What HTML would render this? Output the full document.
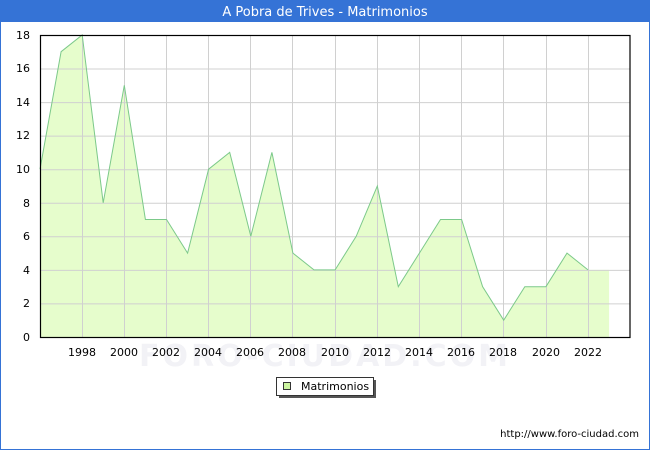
<!DOCTYPE html>
<html><head><meta charset="utf-8"><style>
body{margin:0;width:650px;height:450px;overflow:hidden;background:#fff;font-family:"DejaVu Sans","Liberation Sans",sans-serif;}
</style></head><body>
<svg width="650" height="450" xmlns="http://www.w3.org/2000/svg" style="position:absolute;left:0;top:0">
<rect x="0.5" y="0.5" width="649" height="449" fill="#fff" stroke="#3573d6" stroke-width="1"/>
<rect x="0" y="0" width="650" height="22" fill="#3573d6"/>
<text x="325" y="16" text-anchor="middle" font-size="13" fill="#fff" font-family="DejaVu Sans, sans-serif">A Pobra de Trives - Matrimonios</text>
<polygon fill="#e6fdcc" points="40,337 40,169.2 61.1,51.7 82.2,35 103.2,202.8 124.3,85.3 145.4,219.5 166.5,219.5 187.6,253.1 208.6,169.2 229.7,152.4 250.8,236.3 271.9,152.4 292.9,253.1 314,269.9 335.1,269.9 356.2,236.3 377.3,186 398.3,286.7 419.4,253.1 440.5,219.5 461.6,219.5 482.6,286.7 503.7,320.2 524.8,286.7 545.9,286.7 567,253.1 588,269.9 609.1,269.9 609.1,337"/>
<g stroke="#d0d0d0" stroke-width="1">
<line x1="40" x2="630" y1="303.9" y2="303.9"/><line x1="40" x2="630" y1="270.4" y2="270.4"/><line x1="40" x2="630" y1="236.8" y2="236.8"/><line x1="40" x2="630" y1="203.3" y2="203.3"/><line x1="40" x2="630" y1="169.7" y2="169.7"/><line x1="40" x2="630" y1="136.1" y2="136.1"/><line x1="40" x2="630" y1="102.6" y2="102.6"/><line x1="40" x2="630" y1="69" y2="69"/>
<line y1="35" y2="337" x1="82.5" x2="82.5"/><line y1="35" y2="337" x1="124.5" x2="124.5"/><line y1="35" y2="337" x1="166.5" x2="166.5"/><line y1="35" y2="337" x1="208.5" x2="208.5"/><line y1="35" y2="337" x1="250.5" x2="250.5"/><line y1="35" y2="337" x1="292.5" x2="292.5"/><line y1="35" y2="337" x1="335.5" x2="335.5"/><line y1="35" y2="337" x1="377.5" x2="377.5"/><line y1="35" y2="337" x1="419.5" x2="419.5"/><line y1="35" y2="337" x1="461.5" x2="461.5"/><line y1="35" y2="337" x1="503.5" x2="503.5"/><line y1="35" y2="337" x1="546.5" x2="546.5"/><line y1="35" y2="337" x1="588.5" x2="588.5"/>
</g>
<polyline fill="none" stroke="#7cc98a" stroke-width="1" points="40,169.2 61.1,51.7 82.2,35 103.2,202.8 124.3,85.3 145.4,219.5 166.5,219.5 187.6,253.1 208.6,169.2 229.7,152.4 250.8,236.3 271.9,152.4 292.9,253.1 314,269.9 335.1,269.9 356.2,236.3 377.3,186 398.3,286.7 419.4,253.1 440.5,219.5 461.6,219.5 482.6,286.7 503.7,320.2 524.8,286.7 545.9,286.7 567,253.1 588,269.9"/>
<rect x="40.5" y="35.5" width="589.5" height="302" fill="none" stroke="#000" stroke-width="1.2"/>
<text x="325" y="366" text-anchor="middle" font-size="30" fill="#f2f2f6" font-weight="bold" letter-spacing="3">FORO-CIUDAD.COM</text>
<g font-size="11" fill="#000" text-anchor="end">
<text x="30" y="341">0</text><text x="30" y="307">2</text><text x="30" y="274">4</text><text x="30" y="240">6</text><text x="30" y="207">8</text><text x="30" y="173">10</text><text x="30" y="139">12</text><text x="30" y="106">14</text><text x="30" y="72">16</text><text x="30" y="39">18</text>
</g>
<g font-size="11" fill="#000" text-anchor="middle">
<text x="82" y="356">1998</text><text x="124" y="356">2000</text><text x="166" y="356">2002</text><text x="208" y="356">2004</text><text x="250" y="356">2006</text><text x="292" y="356">2008</text><text x="335" y="356">2010</text><text x="377" y="356">2012</text><text x="419" y="356">2014</text><text x="461" y="356">2016</text><text x="503" y="356">2018</text><text x="546" y="356">2020</text><text x="588" y="356">2022</text>
</g>
<rect x="279" y="380" width="97" height="18" fill="#555"/>
<rect x="276.5" y="377.5" width="97" height="18" fill="#fff" stroke="#333" stroke-width="1"/>
<rect x="283.5" y="382.5" width="7" height="7" fill="#ccf5a0" stroke="#333" stroke-width="1"/>
<text x="301" y="390" font-size="11" fill="#000">Matrimonios</text>
<text x="639" y="437" font-size="10" fill="#000" text-anchor="end">http://www.foro-ciudad.com</text>
</svg>
</body></html>
